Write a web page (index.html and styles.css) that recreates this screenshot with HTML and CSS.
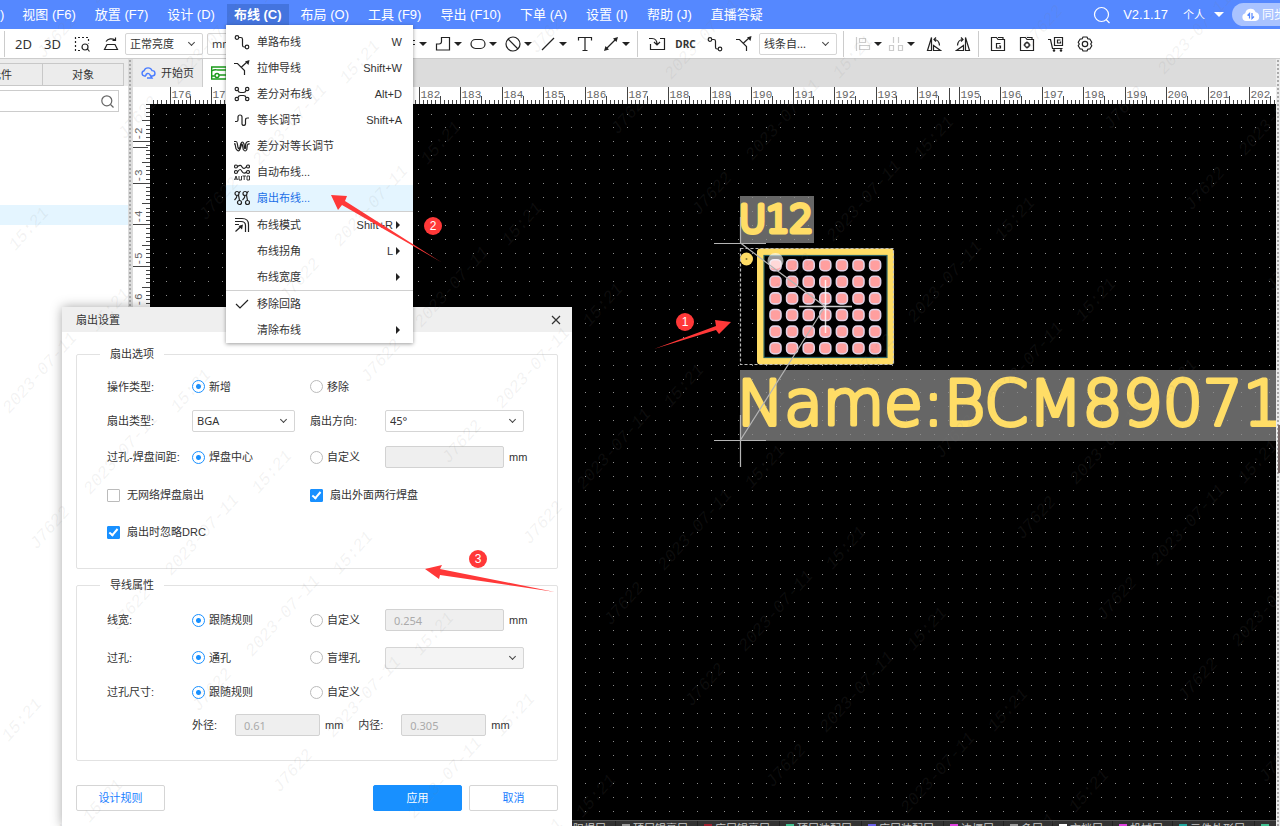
FILE: index.html
```html
<!DOCTYPE html>
<html lang="zh-CN">
<head>
<meta charset="utf-8">
<meta name="viewport" content="width=device-width, initial-scale=1">
<title>PCB 编辑器 - 扇出设置</title>
<link rel="stylesheet" href="styles.css">
</head>
<body>
<div class="app">
  <header class="menubar">
    <nav class="menus">
      <a class="menu-link menu-first" href="#">)</a>
      <a class="menu-link" href="#">视图 (F6)</a>
      <a class="menu-link" href="#">放置 (F7)</a>
      <a class="menu-link" href="#">设计 (D)</a>
      <a class="menu-link open" href="#">布线 (C)</a>
      <a class="menu-link" href="#">布局 (O)</a>
      <a class="menu-link" href="#">工具 (F9)</a>
      <a class="menu-link" href="#">导出 (F10)</a>
      <a class="menu-link" href="#">下单 (A)</a>
      <a class="menu-link" href="#">设置 (I)</a>
      <a class="menu-link" href="#">帮助 (J)</a>
      <a class="menu-link" href="#">直播答疑</a>
    </nav>
    <div class="account">
      <button class="plain" aria-label="搜索"><svg width="18" height="18" viewBox="0 0 18 18"><circle cx="8.500" cy="8.500" r="7"/><path d="M13 13.500l3.500 3.500"/></svg></button>
      <span class="version">V2.1.17</span>
      <button class="plain personal">个人<span class="caret-white"></span></button>
      <button class="sync"><svg width="18" height="14" viewBox="0 0 18 14"><path fill="#fff" d="M4 13a4 4 0 0 1-.8-7.800A5.500 5.500 0 0 1 13.700 4.200 4.500 4.500 0 0 1 13.500 13z"/><path fill="none" stroke="#5588ff" stroke-width="1.200" d="M7.500 10.500V5.500l-2 2M10 5v5.500l2-2"/></svg><span>同步</span></button>
    </div>
  </header>

  <div class="toolbar">
    <span class="sep"></span>
    <button class="tb">2D</button>
    <button class="tb">3D</button>
    <button class="tb" aria-label="框选查找"><svg width="16" height="16" viewBox="0 0 16 16"><path stroke-dasharray="2 2" d="M6 14.500H1.500V1.500h13v6"/><circle cx="11" cy="11" r="3"/><path d="M13.500 13l2 2.500"/></svg></button>
    <button class="tb" aria-label="翻转"><svg width="16" height="16" viewBox="0 0 16 16"><path d="M4 8.500h8l2.500 5h-13zM3 5.500C5 2.500 9 2 12 4M12.500 1.500V4.500H9.500"/></svg></button>
    <span class="pick pick-bright"><select aria-label="亮度"><option>正常亮度</option></select></span>
    <span class="pick pick-unit"><select aria-label="单位"><option>mm</option></select></span>
    <button class="tb split" aria-label="过孔"><svg width="16" height="16" viewBox="0 0 16 16"><path stroke-dasharray="2 2" d="M1 4.500h14M1 8.500h14"/></svg><i class="caret"></i></button>
    <button class="tb split" aria-label="铺铜"><svg width="16" height="16" viewBox="0 0 16 16"><path d="M6.500 1.500h8v12.500h-13V8h2.500q2.500 0 2.500-2.500z"/></svg><i class="caret"></i></button>
    <button class="tb split" aria-label="槽孔"><svg width="16" height="16" viewBox="0 0 16 16"><rect x="1" y="3.500" width="14" height="9" rx="4.500"/></svg><i class="caret"></i></button>
    <button class="tb split" aria-label="禁止区域"><svg width="16" height="16" viewBox="0 0 16 16"><circle cx="8" cy="8" r="7"/><path d="M3 3l10 10"/></svg><i class="caret"></i></button>
    <button class="tb split" aria-label="直线"><svg width="16" height="16" viewBox="0 0 16 16"><path d="M2 14L14 2"/></svg><i class="caret"></i></button>
    <button class="tb narrow" aria-label="文本"><svg width="16" height="16" viewBox="0 0 16 16"><path d="M1.500 4.500v-3h13v3M8 1.500v13M5.500 14.500h5"/></svg></button>
    <button class="tb split spaced" aria-label="尺寸"><svg width="16" height="16" viewBox="0 0 16 16"><path d="M3 13L13 3"/><path class="solid" d="M1 15l1.500-5 3.500 3.500zM15 1l-1.500 5L10 2.500z"/></svg><i class="caret"></i></button>
    <span class="sep"></span>
    <button class="tb" aria-label="导入变更"><svg width="18" height="16" viewBox="0 0 18 16"><path d="M2.500 8v5.500h14v-11H12M1 2.500h3q5 0 5 6M6 6l3 3 3-3"/></svg></button>
    <button class="tb drc">DRC</button>
    <button class="tb" aria-label="单路布线"><svg width="16" height="16" viewBox="0 0 16 16"><use href="#i-route"/></svg></button>
    <button class="tb" aria-label="拉伸导线"><svg width="16" height="16" viewBox="0 0 16 16"><use href="#i-stretch"/></svg></button>
    <span class="pick pick-line"><select aria-label="线条"><option>线条自...</option></select></span>
    <span class="sep"></span>
    <button class="tb split tight" aria-label="对齐"><svg class="dim" width="16" height="16" viewBox="0 0 16 16"><path d="M1.500 1v14M4.500 2.500h6v4h-6zM4.500 9.500h10v4h-10z"/></svg><i class="caret"></i></button>
    <button class="tb split tight" aria-label="分布"><svg class="dim" width="16" height="16" viewBox="0 0 16 16"><path d="M5.500 1v6M10.500 1v6M1.500 9.500h4v5h-4zM10.500 9.500h4v5h-4z"/></svg><i class="caret"></i></button>
    <button class="tb" aria-label="左旋"><svg width="16" height="16" viewBox="0 0 16 16"><path d="M5.500 1.500v13h-4zM7.500 14.500v-5l7 5zM8 3.500q5 0 5.500 6M10 1.500L8 3.500l2 2"/></svg></button>
    <button class="tb" aria-label="右旋"><svg width="16" height="16" viewBox="0 0 16 16"><path d="M10.500 1.500v13h4zM8.500 14.500v-5l-7 5zM8 3.500q-5 0-5.500 6M6 1.500l2 2-2 2"/></svg></button>
    <span class="sep"></span>
    <button class="tb" aria-label="Gerber"><svg width="16" height="16" viewBox="0 0 16 16"><path d="M1.500 14.500v-13h5l1.500 2h6.500v11zM8 1.500h5v2M10.500 7.500h-4v4.500h4V10H9"/></svg></button>
    <button class="tb" aria-label="坐标文件"><svg width="16" height="16" viewBox="0 0 16 16"><path d="M1.500 14.500v-13h5l1.500 2h6.500v11zM8 1.500h5v2M8 5.500v2M8 10.500v2M4.500 9h2M9.500 9h2"/><circle cx="8" cy="9" r="2.300"/></svg></button>
    <button class="tb" aria-label="下单"><svg width="16" height="16" viewBox="0 0 16 16"><path d="M0 3.500h2.500l2 9h10M6.500 1.500h8v8h-8zM12.500 4h-3v3h3V5.500"/><circle cx="6" cy="14.500" r=".7"/><circle cx="13" cy="14.500" r=".7"/></svg></button>
    <button class="tb" aria-label="设置"><svg width="16" height="16" viewBox="0 0 16 16"><path stroke-linejoin="round" d="M6 1h4l.8 1.800 2 .2 2 3.200L13.700 8l1.100 1.800-2 3.200-2 .2L10 15H6l-.8-1.800-2-.2-2-3.200L2.300 8 1.200 6.200l2-3.200 2-.2z"/><circle cx="8" cy="8" r="2.700"/></svg></button>
  </div>

  <main class="workspace">
    <aside class="side">
      <div class="side-tabs"><button>元件</button><button>对象</button></div>
      <div class="side-search"><input type="text" aria-label="查找"><svg width="13" height="13" viewBox="0 0 13 13"><circle cx="5.800" cy="5.800" r="5"/><path d="M9.500 9.500l3 3"/></svg></div>
      <div class="side-row"></div>
    </aside>
    <div class="grip"></div>
    <section class="center">
      <div class="doc-tabs">
        <button class="doc-tab"><svg width="15" height="12" viewBox="0 0 15 12"><path d="M5 9H3.500a2.700 2.700 0 0 1-.4-5.300A4.200 4.200 0 0 1 11 3.600 2.700 2.700 0 0 1 11.500 9H10M5 9a2 2 0 0 1 4-1l2 3H6"/></svg>开始页</button>
        <button class="doc-tab active" aria-label="PCB1"><svg width="16" height="14" viewBox="0 0 16 14"><path d="M.7 1h14.600v12H.7zM.7 5C4 3 5 4 7 4h8M.7 10h3M8 9h7"/><circle cx="6" cy="9.500" r="2"/></svg></button>
      </div>
      <svg class="ruler-top" id="rulerTop" aria-hidden="true"></svg>
      <div class="stage">
        <svg class="ruler-left" id="rulerLeft" aria-hidden="true"></svg>
        <svg class="board" id="board">
          <g transform="translate(-150 -104)">
            <rect x="740" y="196" width="74" height="47" fill="#666"/>
            <rect x="740" y="370" width="2000" height="71" fill="#666"/>
            <path id="dots" fill="#8c8c8c"/>
            <text class="silk ref" x="739" y="232">U12</text>
            <text class="silk name" x="737" y="425">Name:BCM89071</text>
            <rect x="760.500" y="252" width="130" height="109" fill="#000" stroke="#ffdd66" stroke-width="7" stroke-linejoin="round"/>
            <rect x="764" y="255.500" width="123" height="102" fill="none" stroke="#2d6468"/>
            <g id="pads"></g>
            <circle cx="746.500" cy="259" r="6.500" fill="#ffdd66"/>
            <circle cx="746.500" cy="259" r="1" fill="#887733"/>
            <circle cx="775.500" cy="261" r="8" fill="#fff" opacity=".6"/>
            <rect x="740.500" y="248.500" width="153" height="116" fill="none" stroke="#bbb" stroke-dasharray="3 2"/>
            <path fill="none" stroke="#b5b5b5" d="M740.500 243L825 306.500 740.500 440M714 243.500h52M740.500 217v27M714 440.500h52M740.500 415v52"/>
            <path fill="none" stroke="#fff" stroke-opacity=".8" stroke-width="1.500" d="M799 306.500h53M825.500 280v53"/>
          </g>
        </svg>
      </div>
      <div class="layers">
        <span class="layer layer-lead">底层阻焊层</span>
        <span class="layer"><i class="sw-gray"></i>顶层锡膏层</span>
        <span class="layer"><i class="sw-red"></i>底层锡膏层</span>
        <span class="layer"><i class="sw-green"></i>顶层装配层</span>
        <span class="layer"><i class="sw-violet"></i>底层装配层</span>
        <span class="layer"><i class="sw-pink"></i>边框层</span>
        <span class="layer"><i class="sw-gray"></i>多层</span>
        <span class="layer"><i class="sw-white"></i>文档层</span>
        <span class="layer"><i class="sw-pink"></i>机械层</span>
        <span class="layer"><i class="sw-teal"></i>元件外形层</span>
        <span class="layer"><i class="sw-green"></i></span>
      </div>
    </section>
    <div class="grip grip-right"><span class="handle"></span></div>
  </main>
</div>

<form class="dialog" role="dialog" aria-labelledby="dlgTitle">
  <div class="dialog-head"><span id="dlgTitle">扇出设置</span><button type="button" class="close" aria-label="关闭"><svg width="10" height="10" viewBox="0 0 10 10"><path d="M1 1l8 8M9 1L1 9"/></svg></button></div>
  <div class="dialog-body">
    <fieldset>
      <legend>扇出选项</legend>
      <div class="grid grid-fan">
        <span>操作类型:</span>
        <label class="opt"><input type="radio" name="op" checked>新增</label>
        <label class="opt"><input type="radio" name="op">移除</label>
        <span></span>
        <label for="fanType">扇出类型:</label>
        <span class="pick pick-type"><select id="fanType"><option>BGA</option></select></span>
        <label for="fanDir">扇出方向:</label>
        <span class="pick pick-wide"><select id="fanDir"><option>45°</option></select></span>
        <span>过孔-焊盘间距:</span>
        <label class="opt"><input type="radio" name="gap" checked>焊盘中心</label>
        <label class="opt"><input type="radio" name="gap">自定义</label>
        <span class="unit"><input class="num num-wide" type="text" aria-label="间距" disabled>mm</span>
        <label class="tick"><input type="checkbox">无网络焊盘扇出</label>
        <label class="tick"><input type="checkbox" checked>扇出外面两行焊盘</label>
        <label class="tick"><input type="checkbox" checked>扇出时忽略DRC</label>
      </div>
    </fieldset>
    <fieldset>
      <legend>导线属性</legend>
      <div class="grid grid-wire">
        <span>线宽:</span>
        <label class="opt"><input type="radio" name="lw" checked>跟随规则</label>
        <label class="opt"><input type="radio" name="lw">自定义</label>
        <span class="unit"><input class="num num-wide" type="text" aria-label="线宽" value="0.254" disabled>mm</span>
        <span>过孔:</span>
        <label class="opt"><input type="radio" name="via" checked>通孔</label>
        <label class="opt"><input type="radio" name="via">盲埋孔</label>
        <span class="pick pick-wide off"><select aria-label="盲埋孔" disabled><option></option></select></span>
        <span>过孔尺寸:</span>
        <label class="opt"><input type="radio" name="size" checked>跟随规则</label>
        <label class="opt"><input type="radio" name="size">自定义</label>
        <span></span>
        <div class="sizes">
          <label for="outer">外径:</label><span class="unit"><input id="outer" class="num" type="text" value="0.61" disabled>mm</span>
          <label for="inner">内径:</label><span class="unit"><input id="inner" class="num" type="text" value="0.305" disabled>mm</span>
        </div>
      </div>
    </fieldset>
    <div class="actions">
      <button type="button" class="btn">设计规则</button>
      <button type="button" class="btn primary">应用</button>
      <button type="button" class="btn">取消</button>
    </div>
  </div>
</form>

<div class="dropdown" role="menu">
  <button class="item" role="menuitem"><svg width="16" height="16" viewBox="0 0 16 16"><use href="#i-route"/></svg><span>单路布线</span><kbd>W</kbd></button>
  <button class="item" role="menuitem"><svg width="16" height="16" viewBox="0 0 16 16"><use href="#i-stretch"/></svg><span>拉伸导线</span><kbd>Shift+W</kbd></button>
  <button class="item" role="menuitem"><svg width="16" height="16" viewBox="0 0 16 16"><circle cx="2.800" cy="3" r="1.700"/><circle cx="13.200" cy="3" r="1.700"/><circle cx="2.800" cy="13" r="1.700"/><circle cx="13.200" cy="13" r="1.700"/><path d="M4 4.500Q4.500 6.500 6.500 6.500h3q2 0 2.500-2M4 11.500q.5-2 2.500-2h3q2 0 2.500 2"/></svg><span>差分对布线</span><kbd>Alt+D</kbd></button>
  <button class="item" role="menuitem"><svg width="16" height="16" viewBox="0 0 16 16"><path d="M1 9.500h1.500q1.500 0 1.500-1.500V5a2 2 0 0 1 4 0v7a1.800 1.800 0 0 0 3.500 0V8q0-2 2-2h1.500"/></svg><span>等长调节</span><kbd>Shift+A</kbd></button>
  <button class="item" role="menuitem"><svg width="16" height="16" viewBox="0 0 16 16"><path d="M0 3.500h2q1 0 1.300 2l.7 4q1 3 2-.5l.7-3Q8.500 2 10 6l.5 4q.5 1.500 1 0V7q.5-3.500 3-3.500h1M0 5.800h1l1 5q2.500 4 4 .5L7.300 7q.7-2 1.200.5l.8 4q2 3 3.500 0l.5-4.500q1-1.500 2.500-1"/></svg><span>差分对等长调节</span></button>
  <button class="item" role="menuitem"><svg width="16" height="17" viewBox="0 0 16 17"><circle cx="2" cy="2.500" r="1.500"/><circle cx="2" cy="8" r="1.500"/><circle cx="14" cy="2.500" r="1.500"/><circle cx="14" cy="8" r="1.500"/><path d="M3.500 2.500C6 1 7 1 8 3s3 2 4.500-.5M3.500 8C6 4 7 5.500 8 7.500s3 2 4.500.5"/><path stroke-width=".9" d="M.5 16L2 12l1.500 4M1 15h2M5 12v4h2.500v-4M8.500 12H12M10.200 12v4M13 12h2.500v4H13z"/></svg><span>自动布线...</span></button>
  <button class="item current" role="menuitem"><svg width="16" height="16" viewBox="0 0 16 16"><circle cx="3" cy="3.500" r="2"/><circle cx="11" cy="3.500" r="2"/><circle cx="5.500" cy="12.500" r="2"/><circle cx="13.500" cy="12.500" r="2"/><path d="M3 5.500q0 2-2.500 4.500M4.500 5l1 5.500M11 5.500q0 2-2.500 4.500M12.500 5l1 5.500M5 3l1.500-2M13 3l1.500-2"/></svg><span>扇出布线...</span></button>
  <hr>
  <button class="item" role="menuitem"><svg width="16" height="16" viewBox="0 0 16 16"><path d="M1 1.500h7q6.500 0 6.500 6V15M1 4.500h6q4.500 0 4.500 4V15M1 7.500h4M1.500 14.500L7.500 9"/><path class="solid" d="M9 7.500L8 12.500 4.500 9z"/></svg><span>布线模式</span><kbd>Shift+R</kbd><i class="sub"></i></button>
  <button class="item" role="menuitem"><span class="noicon">布线拐角</span><kbd>L</kbd><i class="sub"></i></button>
  <button class="item" role="menuitem"><span class="noicon">布线宽度</span><i class="sub sub-only"></i></button>
  <hr>
  <button class="item" role="menuitem"><svg width="16" height="16" viewBox="0 0 16 16"><path d="M2 8l4 4 8-8"/></svg><span>移除回路</span></button>
  <button class="item" role="menuitem"><span class="noicon">清除布线</span><i class="sub sub-only"></i></button>
</div>

<svg class="notes">
  <g fill="#ff3838">
    <path d="M654 349L716 326l-1-6 16 2-12 12-3-4z"/>
    <path d="M441 262l-99-57-4 5-7-15 16 1-2 5z"/>
    <path d="M555 592l-115-17-1 4-14-10 17-4-2 4z"/>
    <circle cx="685" cy="322" r="9"/><circle cx="433" cy="226" r="9"/><circle cx="478" cy="559" r="9"/>
  </g>
  <text x="685" y="326">1</text><text x="433" y="230">2</text><text x="478" y="563">3</text>
</svg>
<svg class="watermark" id="watermark" aria-hidden="true"></svg>

<svg class="defs" aria-hidden="true">
  <symbol id="i-route" viewBox="0 0 16 16"><circle cx="3" cy="3.500" r="1.800"/><circle cx="13" cy="13" r="1.800"/><path d="M4.800 3.500h2q1.700 0 1.700 1.700v6q0 1.800 1.700 1.800h1"/></symbol>
  <symbol id="i-stretch" viewBox="0 0 16 16"><path d="M0 3.500h3.500l7 7v4.500M7 7.500L13 2"/><path class="solid" d="M15.500 0l-1 5L11 1.500z"/></symbol>
</svg>
<script src="app.js"></script>
</body>
</html>
```

FILE: styles.css
```css
*, *::after { box-sizing: border-box; }
body {
  margin: 0;
  overflow: hidden;
  background: #fff;
  color: #333;
  font: 11px/16px "Liberation Sans", "Noto Sans CJK SC", sans-serif;
}
button, input, select { font: inherit; color: inherit; margin: 0; }
button { border: 0; background: none; padding: 0; white-space: nowrap; }
svg { fill: none; stroke: #222; stroke-width: 1.2; flex: none; }
svg text { stroke: none; }
.solid { fill: #222; stroke: none; }
.defs { position: absolute; width: 0; height: 0; }

.app { display: flex; flex-direction: column; height: 100vh; overflow: hidden; }

/* menu bar */
.menubar {
  display: flex;
  justify-content: space-between;
  flex: 0 0 29px;
  background: #5588ff;
  color: #fff;
  font-size: 13px;
}
.menus { display: flex; gap: 5px; align-items: flex-end; }
.menu-link {
  padding: 0 7px;
  height: 25px;
  line-height: 22px;
  color: #fff;
  text-decoration: none;
  white-space: nowrap;
}
.menus .menu-first { padding: 0 6px 0 0; }
.menu-link.open { background: #4474de; font-weight: bold; }
.account { display: flex; align-items: center; }
.account svg { stroke: #fff; }
.plain { display: flex; align-items: center; }
.version { margin: 0 15px 0 12px; }
.personal { gap: 9px; margin-right: 8px; font-size: 11px; }
.caret-white { border: 5px solid transparent; border-top-color: #fff; border-bottom: 0; }
.sync {
  display: flex;
  align-items: center;
  gap: 2px;
  width: 48px;
  height: 23px;
  padding-left: 10px;
  overflow: hidden;
  border-radius: 12px 0 0 12px;
  background: #a9c3ff;
  font-size: 12px;
}
.account .sync svg { stroke: none; }

/* toolbar */
.toolbar {
  display: flex;
  align-items: center;
  flex: 0 0 30px;
  padding-left: 4px;
  border-bottom: 1px solid #ccc;
}
.sep { flex: none; width: 1px; height: 26px; margin: 0 4px 0 0; background: #ccc; }
.sep ~ .sep { margin-left: 1px; }
.pick-line + .sep { margin: 0 9px 0 6px; }
.tb {
  display: flex;
  flex: none;
  align-items: center;
  justify-content: center;
  width: 29px;
  height: 26px;
  font: 13px/16px "Noto Sans", sans-serif;
}
.split { width: 35px; gap: 2px; justify-content: flex-start; padding-left: 2px; }
.tight { width: 33px; }
.narrow { width: 24px; }
.spaced { margin-left: 4px; }
.drc { font: bold 10px/14px "Liberation Sans Narrow", "Noto Sans", sans-serif; }
.caret { margin-left: 1px; border: 4px solid transparent; border-top-color: #222; border-bottom: 0; }
.dim { stroke: #ccc; }

.pick { position: relative; display: block; flex: none; height: 22px; }
.pick select {
  appearance: none;
  width: 100%;
  height: 100%;
  padding: 0 4px;
  border: 1px solid #d5d5d5;
  border-radius: 2px;
  background: #fff;
  font-family: "Noto Sans", "Noto Sans CJK SC", sans-serif;
  opacity: 1;
}
.pick::after {
  content: "";
  position: absolute;
  right: 9px;
  top: 7px;
  width: 5px;
  height: 5px;
  border: solid #444;
  border-width: 0 1px 1px 0;
  transform: rotate(45deg);
}
.pick-bright { width: 78px; }
.pick-unit { width: 191px; margin: 0 0 0 4px; }
.pick-line { width: 78px; margin-left: 1px; }

/* workspace */
.workspace { display: flex; flex: 1; min-height: 0; }
.side { flex: 0 0 128px; min-width: 0; display: flex; flex-direction: column; }
.side-tabs {
  display: flex;
  height: 27px;
  padding: 4px 4px 0 0;
  background: #ececec;
}
.side-tabs button { flex: 1; border: 1px solid #c8c8c8; border-left: 0; line-height: 20px; }
.side-tabs button:first-child { flex: 0 0 43px; text-align: left; text-indent: -10px; }
.side-search {
  display: flex;
  align-items: center;
  height: 22px;
  margin: 4px 9px 0 0;
  padding-right: 4px;
  border: 1px solid #ccc;
  border-left: 0;
}
.side-search input { flex: 1; width: 0; min-width: 0; border: 0; background: none; }
.side-search svg { stroke: #666; }
.side-row { height: 20px; margin-top: 93px; background: #e4f5ff; }
.grip {
  flex: 0 0 5px;
  background: #dcdcdc radial-gradient(circle at 2px 2px, #aaa 1px, transparent 1px) 0 0 / 5px 4px;
}
.grip-right { flex-basis: 4px; background-color: #ececec; }
.handle { display: block; width: 2px; height: 48px; margin: 366px 0 0 2px; border: 1px solid #7a6c6c; background: #fff; }

.center { display: flex; flex-direction: column; flex: 1; min-width: 0; }
.doc-tabs { display: flex; flex: 0 0 28px; background: #dcdcdc; }
.doc-tab { display: flex; align-items: center; gap: 5px; padding: 0 8px; background: #ececec; border-right: 1px solid #ccc; font-size: 11px; }
.doc-tab svg { stroke: #4a7dff; stroke-width: 1.4; }
.doc-tab.active { background: #fff; width: 120px; }
.doc-tab.active svg { stroke: #1a9a1a; }
.ruler-top { display: block; width: 100%; height: 17px; }
.stage { display: flex; flex: 1; min-height: 0; }
.ruler-left { width: 17px; height: 100%; }
.board { flex: 1; width: 0; height: 100%; background: #000; stroke: none; }
.ruler-top text, .ruler-left text { fill: #666; font: 11px/12px "Liberation Mono", monospace; }
.ruler-top path, .ruler-left path { stroke: #444; stroke-width: 1; }
.board .silk { fill: #ffdd66; font-family: "DejaVu Sans", sans-serif; font-weight: 200; stroke: #ffdd66; stroke-linejoin: round; }
.ref { font-size: 37px; stroke-width: 5; }
.name { font-size: 63px; stroke-width: 4; }

.layers {
  display: flex;
  flex: 0 0 6px;
  overflow: hidden;
  border-top: 1px solid #555;
  background: #333;
  color: #c8c8c8;
}
.layer { display: flex; flex: none; gap: 3px; padding: 0 9px 0 6px; border-right: 1px solid #222; line-height: 16px; white-space: nowrap; }
.layer-lead { width: 483px; justify-content: flex-end; }
.layer i { width: 8px; height: 8px; margin-top: 3px; background: #999; }
.layer .sw-red { background: #a02030; }
.layer .sw-green { background: #40c090; }
.layer .sw-violet { background: #6a60e8; }
.layer .sw-pink { background: #e040e0; }
.layer .sw-white { background: #fff; }
.layer .sw-teal { background: #20a8a0; }

/* drop-down menu */
.dropdown {
  position: absolute;
  left: 226px;
  top: 25px;
  width: 187px;
  padding: 4px 0 0;
  background: #fff;
  box-shadow: 0 1px 4px rgba(0, 0, 0, .4);
}
.item { display: flex; align-items: center; width: 100%; height: 26px; padding: 0 11px 0 8px; color: #333; text-align: left; }
.item svg + span { margin-left: 7px; }
.item .noicon { margin-left: 23px; }
.item kbd { margin-left: auto; font: inherit; }
.current { background: #e4f5ff; color: #1a6fe8; }
.dropdown hr { height: 1px; margin: 0; border: 0; background: #d0d0d0; }
.sub { margin: 0 2px 0 3px; border: 4px solid transparent; border-left-color: #222; border-right: 0; }
.sub-only { margin-left: auto; }

/* dialog */
.dialog {
  position: absolute;
  left: 62px;
  top: 307px;
  bottom: 0;
  width: 510px;
  border-radius: 2px 2px 0 0;
  background: #fff;
  box-shadow: 0 0 12px rgba(0, 0, 0, .35);
}
.dialog-head { display: flex; align-items: center; justify-content: space-between; height: 25px; padding: 0 11px 0 14px; background: #efefef; }
.close { display: flex; }
.close svg { stroke: #333; }
.dialog-body { padding: 14px 14px 0; }
fieldset { margin: 0; min-width: 0; padding: 8px 0 18px 30px; border: 1px solid #e2e2e2; border-radius: 2px; }
fieldset + fieldset { margin-top: 8px; }
legend { height: 16px; margin-left: -7px; padding: 0 10px; }
.grid { display: grid; grid-template-columns: 85px 118px 75px 1fr; align-items: center; }
.grid-fan { grid-template-rows: 33px 35px 38px 38px 36px; }
.grid-wire { grid-template-rows: 38px 37px 32px 34px; }
.opt { display: flex; align-items: center; gap: 4px; }
.tick { display: flex; align-items: center; gap: 7px; grid-column: span 2; }
.opt input, .tick input { appearance: none; position: relative; width: 13px; height: 13px; border: 1px solid #bbb; background: #fff; }
.opt input { border-radius: 50%; }
.opt input:checked { border-color: #1890ff; background: radial-gradient(circle, #1890ff 2px, #fff 3px); }
.tick input { border-radius: 1px; }
.tick input:checked { border-color: #1890ff; background: #1890ff; }
.tick input:checked::after {
  content: "";
  position: absolute;
  left: 3px;
  top: 0;
  width: 5px;
  height: 9px;
  border: solid #fff;
  border-width: 0 2px 2px 0;
  transform: rotate(40deg);
}
.pick-type { width: 103px; }
.pick-wide { width: 139px; }
.pick.off select { background: #f4f4f4; }
.unit { display: flex; align-items: center; gap: 5px; }
.num {
  width: 85px;
  height: 22px;
  padding: 0 8px;
  border: 1px solid #d2d2d2;
  border-radius: 2px;
  background: #efefef;
  color: #aaa;
  font-family: "Noto Sans", sans-serif;
}
.num-wide { width: 119px; }
.sizes { display: flex; align-items: center; grid-column: 2 / -1; }
.sizes label { width: 43px; }
.sizes .unit { margin-right: 15px; }
.actions { display: flex; gap: 7px; margin-top: 24px; }
.btn { width: 89px; height: 26px; border: 1px solid #d5d5d5; border-radius: 2px; background: #fff; color: #1a80ff; }
.btn:first-child { margin-right: auto; }
.primary { border-color: #1890ff; background: #1890ff; color: #fff; }

/* callouts and watermark lie over everything */
.notes, .watermark { position: absolute; inset: 0; width: 100%; height: 100%; pointer-events: none; stroke: none; }
.notes text { fill: #fff; font-size: 12px; text-anchor: middle; }
.watermark text { fill: #808080; fill-opacity: .1; font: italic 17px/20px "Liberation Mono", monospace; text-anchor: middle; }
```

FILE: app.js
```js
const NS = "http://www.w3.org/2000/svg";
function add(parent, tag, attrs, text) {
  const el = document.createElementNS(NS, tag);
  for (const key in attrs) el.setAttribute(key, attrs[key]);
  if (text) el.textContent = text;
  parent.appendChild(el);
}

const UNIT = 41.53;
const DOT = 13.95;

// top ruler
const top_ = document.getElementById("rulerTop");
let path = "";
for (let n = 1755; 170.2 + (n - 1760) * UNIT / 10 - 133 < top_.clientWidth; n++) {
  const x = Math.floor(170.2 + (n - 1760) * UNIT / 10 - 133) + 0.5;
  if (x < 17) continue;
  const len = n % 10 === 0 ? 17 : n % 5 === 0 ? 8 : 4;
  path += `M${x} 17v-${len}`;
  if (n % 10 === 0) add(top_, "text", { x: x + 1, y: 11 }, String(n / 10));
}
add(top_, "path", { d: path + "M816.5 1v16" });

// left ruler
const left = document.getElementById("rulerLeft");
path = "";
for (let n = 11; 141.7 + (n - 20) * UNIT / 10 - 104 < left.clientHeight; n++) {
  const y = Math.floor(141.7 + (n - 20) * UNIT / 10 - 104) + 0.5;
  if (y < 0) continue;
  const len = n % 10 === 0 ? 17 : n % 5 === 0 ? 8 : 4;
  path += `M17 ${y}h-${len}`;
  if (n % 10 === 0) add(left, "text", { transform: `translate(9 ${y - 1}) rotate(-90)` }, "-" + n / 10);
}
add(left, "path", { d: path + "M0 43.5h15" });

// grid dots
const board = document.getElementById("board");
path = "";
for (let y = 114; y < board.clientHeight + 104; y += DOT)
  for (let x = 153; x < board.clientWidth + 150; x += DOT)
    path += `M${Math.floor(x)} ${Math.floor(y)}h1v1h-1z`;
document.getElementById("dots").setAttribute("d", path);

// BGA pads
const pads = document.getElementById("pads");
for (let r = 0; r < 6; r++)
  for (let c = 0; c < 7; c++)
    add(pads, "rect", { x: 770 + c * 16.6, y: 259.7 + r * 16.6, width: 11, height: 11, rx: 4, fill: "#ff9f9f", stroke: "#e0d0e4", "stroke-width": 1.6 });

// watermark
const mark = document.getElementById("watermark");
const series = [["J7622", 380, 360], ["15:21", 190, 390], ["2023-07-11", 532, 367]];
for (const [label, x0, y0] of series)
  for (let p = -3; p <= 3; p++)
    for (let k = -12; k <= 12; k++) {
      const x = x0 + p * 493 + k * 81, y = y0 - p * 5 + k * 81;
      if (x > -60 && x < mark.clientWidth + 60 && y > -60 && y < mark.clientHeight + 60)
        add(mark, "text", { transform: `translate(${x} ${y}) rotate(-48)`, y: 6 }, label);
    }
```
